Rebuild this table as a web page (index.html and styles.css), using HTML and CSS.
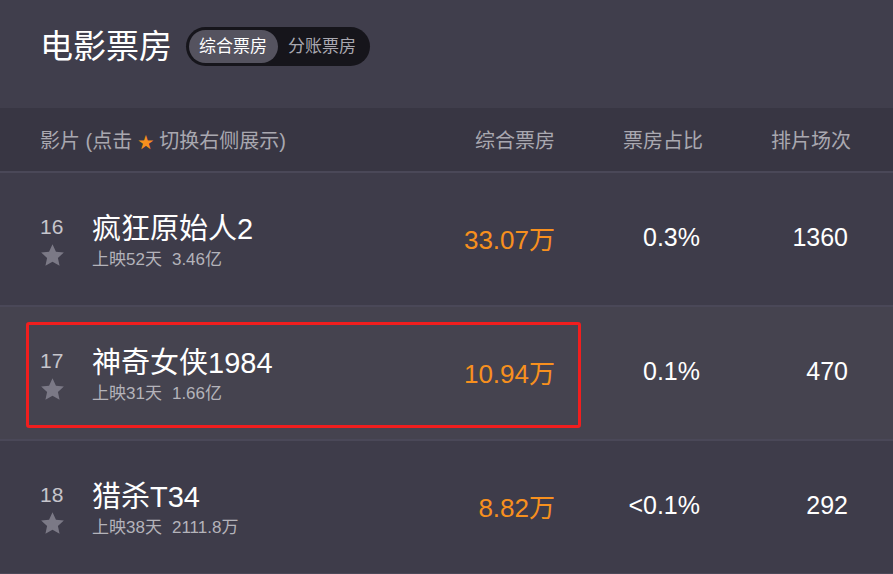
FILE: index.html
```html
<!DOCTYPE html>
<html lang="zh-CN">
<head>
    <meta charset="UTF-8">
    <meta name="viewport" content="width=device-width, initial-scale=1.0">
    <title>电影票房</title>
    <link rel="stylesheet" href="styles.css">
</head>
<body>
    <div class="page">
        <div class="top-bar">
            <h1 class="page-title">电影票房</h1>
            <div class="toggle">
                <span class="toggle-item active">综合票房</span>
                <span class="toggle-item">分账票房</span>
            </div>
        </div>

        <div class="table-head">
            <div class="col-name">影片 (点击 <span class="mini-star">&#9733;</span> 切换右侧展示)</div>
            <div class="col-num">综合票房</div>
            <div class="col-num">票房占比</div>
            <div class="col-num">排片场次</div>
        </div>

        <div class="movie-row">
            <div class="col-name movie">
                <div class="rank-box">
                    <div class="rank">16</div>
                    <svg class="star" viewBox="0 0 24 24"><path d="M12 1.2l3.3 7.1 7.6.8-5.7 5.2 1.6 7.6L12 18l-6.8 3.9 1.6-7.6L1.1 9.1l7.6-.8z"/></svg>
                </div>
                <div class="info">
                    <div class="movie-title">疯狂原始人2</div>
                    <div class="movie-sub">上映52天<span class="gap"></span>3.46亿</div>
                </div>
            </div>
            <div class="col-num box">33.07万</div>
            <div class="col-num val">0.3%</div>
            <div class="col-num val">1360</div>
        </div>

        <div class="movie-row current">
            <div class="mark"></div>
            <div class="col-name movie">
                <div class="rank-box">
                    <div class="rank">17</div>
                    <svg class="star" viewBox="0 0 24 24"><path d="M12 1.2l3.3 7.1 7.6.8-5.7 5.2 1.6 7.6L12 18l-6.8 3.9 1.6-7.6L1.1 9.1l7.6-.8z"/></svg>
                </div>
                <div class="info">
                    <div class="movie-title">神奇女侠1984</div>
                    <div class="movie-sub">上映31天<span class="gap"></span>1.66亿</div>
                </div>
            </div>
            <div class="col-num box">10.94万</div>
            <div class="col-num val">0.1%</div>
            <div class="col-num val">470</div>
        </div>

        <div class="movie-row">
            <div class="col-name movie">
                <div class="rank-box">
                    <div class="rank">18</div>
                    <svg class="star" viewBox="0 0 24 24"><path d="M12 1.2l3.3 7.1 7.6.8-5.7 5.2 1.6 7.6L12 18l-6.8 3.9 1.6-7.6L1.1 9.1l7.6-.8z"/></svg>
                </div>
                <div class="info">
                    <div class="movie-title">猎杀T34</div>
                    <div class="movie-sub">上映38天<span class="gap"></span>2111.8万</div>
                </div>
            </div>
            <div class="col-num box">8.82万</div>
            <div class="col-num val">&lt;0.1%</div>
            <div class="col-num val">292</div>
        </div>
    </div>
</body>
</html>
```

FILE: styles.css
```css
body {
    margin: 0;
    background-color: #3e3c4a;
    font-family: "Liberation Sans", "Noto Sans CJK SC", sans-serif;
}

.page {
    width: 893px;
}

.top-bar {
    height: 108px;
    box-sizing: border-box;
    padding: 27px 0 0 40px;
    display: flex;
    align-items: flex-start;
    background-color: #403e4c;
}

.page-title {
    margin: 0 14px 0 0;
    font-size: 33px;
    font-weight: normal;
    line-height: 39px;
    color: #ffffff;
}

.toggle {
    display: flex;
    padding: 3px;
    border-radius: 20px;
    background-color: #16151b;
}

.toggle-item {
    padding: 0 11px 0 10px;
    height: 33px;
    line-height: 33px;
    font-size: 17px;
    color: #a9a8b0;
    border-radius: 17px;
}

.toggle-item.active {
    background-color: #55535f;
    color: #ffffff;
}

.table-head,
.movie-row {
    display: flex;
    align-items: center;
    padding: 0 42px 0 40px;
    border-bottom: 2px solid #4a4858;
}

.table-head {
    height: 63px;
    background-color: #383643;
    font-size: 20px;
    color: #a9a8b0;
}

.col-name {
    flex: 1;
}

.col-num {
    box-sizing: border-box;
    width: 148px;
    text-align: right;
}

.table-head .col-num:first-of-type {
    width: auto;
}

.mini-star {
    color: #f7901e;
    font-size: 16px;
}

.movie-row {
    height: 132px;
    position: relative;
    background-color: #3e3c4a;
}

.movie-row.current {
    background-color: #45434f;
}

.mark {
    position: absolute;
    left: 26px;
    top: 15px;
    width: 549px;
    height: 100px;
    border: 3px solid #f01e1e;
    border-radius: 3px;
}

.movie {
    display: flex;
    align-items: flex-start;
    padding-top: 6px;
}

.rank-box {
    width: 52px;
    padding-top: 2px;
}

.rank {
    font-size: 21px;
    line-height: 24px;
    color: #c6c5cc;
}

.star {
    display: block;
    width: 25px;
    height: 25px;
    margin-top: 4px;
    fill: #7b7986;
}

.movie-title {
    font-size: 29px;
    line-height: 32px;
    color: #ffffff;
}

.movie-sub {
    margin-top: 4px;
    font-size: 17px;
    line-height: 22px;
    color: #b4b3ba;
}

.gap {
    display: inline-block;
    width: 10px;
}

.box {
    font-size: 26px;
    color: #f7901e;
    margin-top: -4px;
}

.val {
    font-size: 25px;
    color: #ffffff;
    padding-right: 3px;
    margin-top: -4px;
}
```
